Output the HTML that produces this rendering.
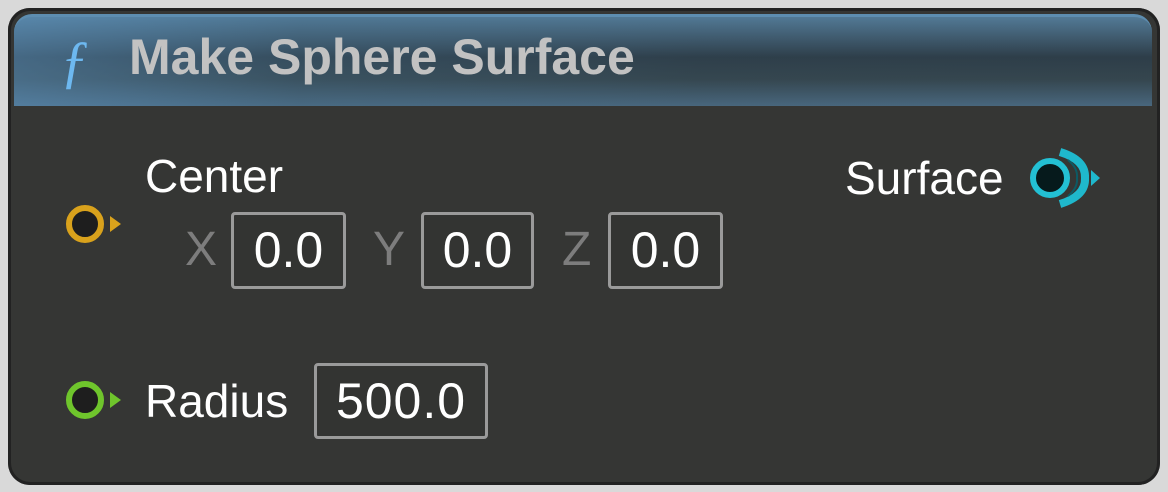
<!DOCTYPE html>
<html><head><style>
body{margin:0;width:1168px;height:492px;background:#d9d9d9;position:relative;overflow:hidden;font-family:"Liberation Sans",sans-serif}
.node{position:absolute;left:8px;top:8px;width:1152px;height:477px;background:#353634;border-radius:22px;box-shadow:inset 0 0 0 3px #222;}
.hdr{position:absolute;left:14px;top:14px;width:1138px;height:89px;border-radius:18px 18px 0 0;
background:linear-gradient(90deg,rgba(90,140,180,0.55) 0%,rgba(70,105,130,0.35) 25%,rgba(60,75,85,0.15) 60%,rgba(60,66,70,0.1) 100%),linear-gradient(180deg,#55809f 0%,#2c3d49 45%,#34464f 70%,#4a6b84 100%);
border-top:3px solid #5d8db0;}
.t{position:absolute;white-space:nowrap;color:#fff}
.box{position:absolute;border:3px solid #9a9a9a;border-radius:4px;background:#333432;color:#fff;font-size:50px;text-align:center;box-sizing:border-box;line-height:70px}
.lbl{position:absolute;color:#7d7d7d;font-size:48px}
</style></head><body>
<div class="node"></div>
<div class="hdr"></div>
<div class="t" style="left:60px;top:28px;font-size:58px;font-style:italic;color:#6db8f0;font-family:'Liberation Serif',serif">ƒ</div>
<div class="t" style="left:129px;top:28px;font-size:50px;font-weight:bold;color:#c2c2c2">Make Sphere Surface</div>
<div class="t" style="left:145px;top:149px;font-size:46px">Center</div>
<div class="t" style="left:845px;top:151px;font-size:46px">Surface</div>
<div class="t" style="left:145px;top:374px;font-size:46px">Radius</div>
<div class="lbl" style="left:185px;top:222px">X</div>
<div class="box" style="left:231px;top:212px;width:115px;height:77px">0.0</div>
<div class="lbl" style="left:373px;top:222px">Y</div>
<div class="box" style="left:421px;top:212px;width:113px;height:77px">0.0</div>
<div class="lbl" style="left:562px;top:222px">Z</div>
<div class="box" style="left:608px;top:212px;width:115px;height:77px">0.0</div>
<div class="box" style="left:314px;top:363px;width:174px;height:76px;letter-spacing:1px">500.0</div>
<svg style="position:absolute;left:0;top:0" width="1168" height="492">
<circle cx="85" cy="224" r="16" fill="#1e1e1e" stroke="#d9a21c" stroke-width="6"/>
<path d="M110 216 L121 224 L110 232Z" fill="#d9a21c"/>
<circle cx="85" cy="400" r="16" fill="#1e1e1e" stroke="#6fc52c" stroke-width="6"/>
<path d="M110 392 L121 400 L110 408Z" fill="#6fc52c"/>
<path d="M1060 152 Q1086 160 1085 178 Q1086 196 1060 204" fill="none" stroke="#1fb8cc" stroke-width="8"/>
<path d="M1068 160 Q1078 168 1077 178 Q1078 188 1068 196" fill="none" stroke="#0c5a64" stroke-width="2"/>
<circle cx="1050" cy="178" r="17" fill="#061a1c" stroke="#23c0d4" stroke-width="6"/>
<path d="M1091 170 L1100 178 L1091 186Z" fill="#1fb8cc"/>
</svg>
</body></html>
